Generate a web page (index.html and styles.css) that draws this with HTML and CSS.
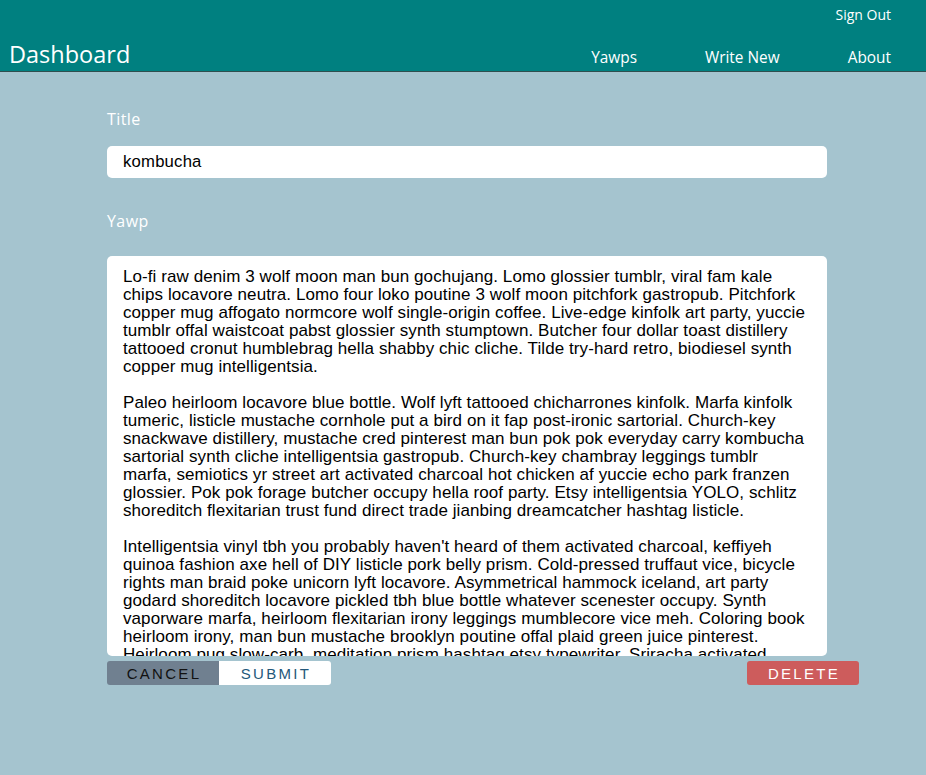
FILE: index.html
```html
<!DOCTYPE html>
<html lang="en">
<head>
<meta charset="utf-8">
<title>Dashboard</title>
<link rel="stylesheet" href="styles.css">
</head>
<body>
<header class="topbar">
  <div class="signout-row"><a class="signout" href="#">Sign Out</a></div>
  <div class="main-row">
    <h1 class="brand">Dashboard</h1>
    <nav class="links">
      <a href="#">Yawps</a>
      <a href="#">Write New</a>
      <a href="#">About</a>
    </nav>
  </div>
</header>
<main class="editor">
  <label class="field-label" for="title">Title</label>
  <input class="title-input" id="title" type="text" value="kombucha">
  <label class="field-label yawp-label" for="yawp">Yawp</label>
  <textarea class="yawp-text" id="yawp">Lo-fi raw denim 3 wolf moon man bun gochujang. Lomo glossier tumblr, viral fam kale chips locavore neutra. Lomo four loko poutine 3 wolf moon pitchfork gastropub. Pitchfork copper mug affogato normcore wolf single-origin coffee. Live-edge kinfolk art party, yuccie tumblr offal waistcoat pabst glossier synth stumptown. Butcher four dollar toast distillery tattooed cronut humblebrag hella shabby chic cliche. Tilde try-hard retro, biodiesel synth copper mug intelligentsia.

Paleo heirloom locavore blue bottle. Wolf lyft tattooed chicharrones kinfolk. Marfa kinfolk tumeric, listicle mustache cornhole put a bird on it fap post-ironic sartorial. Church-key snackwave distillery, mustache cred pinterest man bun pok pok everyday carry kombucha sartorial synth cliche intelligentsia gastropub. Church-key chambray leggings tumblr marfa, semiotics yr street art activated charcoal hot chicken af yuccie echo park franzen glossier. Pok pok forage butcher occupy hella roof party. Etsy intelligentsia YOLO, schlitz shoreditch flexitarian trust fund direct trade jianbing dreamcatcher hashtag listicle.

Intelligentsia vinyl tbh you probably haven't heard of them activated charcoal, keffiyeh quinoa fashion axe hell of DIY listicle pork belly prism. Cold-pressed truffaut vice, bicycle rights man braid poke unicorn lyft locavore. Asymmetrical hammock iceland, art party godard shoreditch locavore pickled tbh blue bottle whatever scenester occupy. Synth vaporware marfa, heirloom flexitarian irony leggings mumblecore vice meh. Coloring book heirloom irony, man bun mustache brooklyn poutine offal plaid green juice pinterest. Heirloom pug slow-carb, meditation prism hashtag etsy typewriter. Sriracha activated charcoal selvage, tofu banjo kitsch cray.</textarea>
  <div class="actions">
    <div class="btn-group">
      <button class="btn btn-cancel" type="button">Cancel</button>
      <button class="btn btn-submit" type="button">Submit</button>
    </div>
    <button class="btn btn-delete" type="button">Delete</button>
  </div>
</main>
</body>
</html>
```

FILE: styles.css
```css
* { box-sizing: border-box; }

html, body {
  margin: 0;
  padding: 0;
}

body {
  background: #a5c4cf;
  font-family: "Open Sans", "Liberation Sans", sans-serif;
  color: #fff;
  min-height: 775px;
}

.topbar {
  background: #008080;
  height: 72px;
  border-bottom: 1px solid #2f4f4f;
}

.signout-row {
  display: flex;
  justify-content: flex-end;
  padding: 5px 35px 0 0;
  height: 30px;
}

.signout {
  color: #fff;
  text-decoration: none;
  font-size: 14px;
  line-height: 19px;
}

.main-row {
  display: flex;
  justify-content: space-between;
  align-items: baseline;
  padding: 7px 35px 0 9px;
}

.brand {
  margin: 0;
  font-weight: 400;
  font-size: 23.5px;
  line-height: 34px;
  color: #fff;
}

.links {
  display: flex;
  gap: 68px;
}

.links a {
  color: #fff;
  text-decoration: none;
  font-size: 15.4px;
}

.editor {
  display: flex;
  flex-direction: column;
  align-items: flex-start;
  padding: 36px 0 0 107px;
}

.field-label {
  display: block;
  font-size: 16px;
  line-height: 22px;
  letter-spacing: 0.4px;
  color: #fff;
}

.title-input {
  margin-top: 16px;
  width: 720px;
  height: 32px;
  border: none;
  border-radius: 5px;
  background: #fff;
  padding: 0 16px;
  font-family: "Liberation Sans", Arial, sans-serif;
  font-size: 16.7px;
  letter-spacing: 0.2px;
  color: #000;
  outline: none;
}

.yawp-label {
  margin-top: 32px;
}

.yawp-text {
  margin-top: 24px;
  width: 720px;
  height: 400px;
  border: none;
  border-radius: 5px;
  background: #fff;
  padding: 12px 16px;
  font-family: "Liberation Sans", Arial, sans-serif;
  font-size: 17px;
  letter-spacing: 0.08px;
  line-height: 18px;
  color: #000;
  resize: none;
  overflow: hidden;
  outline: none;
}

.actions {
  margin-top: 5px;
  width: 752px;
  display: flex;
  justify-content: space-between;
}

.btn-group {
  display: flex;
}

.btn {
  width: 112px;
  height: 24px;
  border: none;
  padding: 0 0 0 2px;
  font-family: "Liberation Sans", Arial, sans-serif;
  font-size: 15px;
  letter-spacing: 2.3px;
  text-transform: uppercase;
  cursor: pointer;
}

.btn-cancel {
  background: #708090;
  color: #111;
  border-radius: 3px 0 0 3px;
}

.btn-submit {
  background: #fff;
  color: #24587a;
  border-radius: 0 3px 3px 0;
}

.btn-delete {
  background: #cd5c5c;
  color: #fff;
  border-radius: 3px;
}
```
